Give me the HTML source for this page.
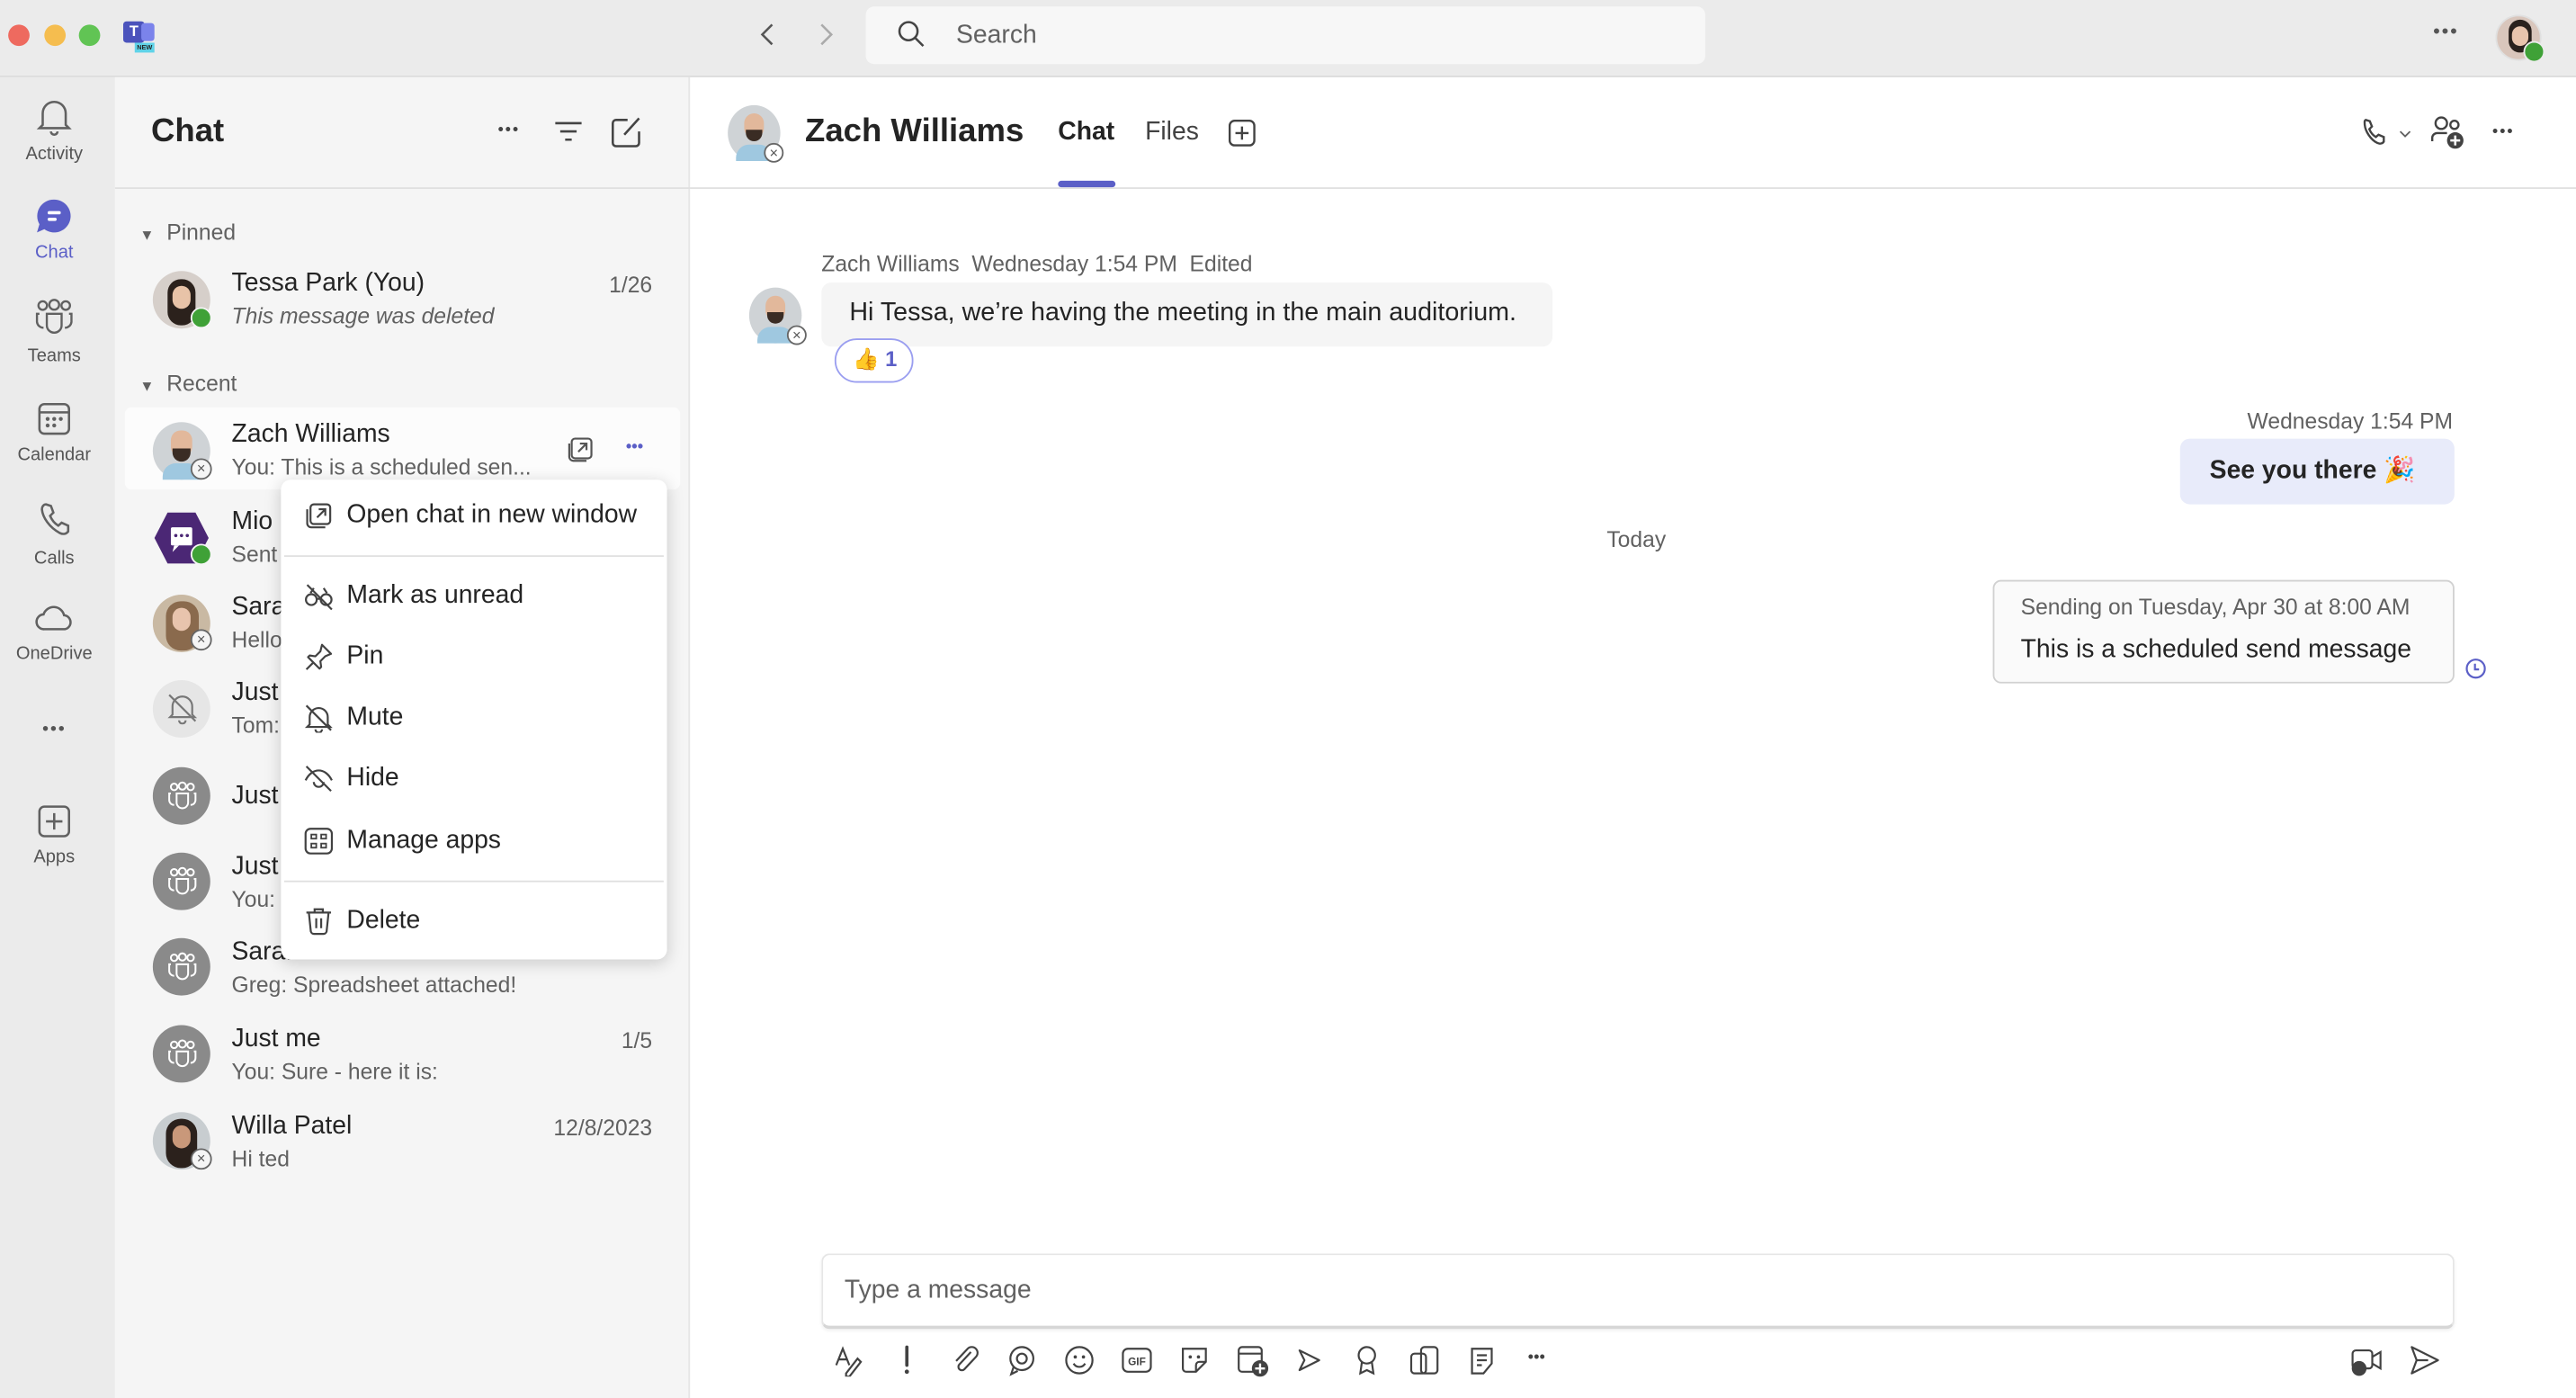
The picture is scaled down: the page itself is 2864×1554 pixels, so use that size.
<!DOCTYPE html>
<html><head><meta charset="utf-8">
<style>
*{box-sizing:border-box;margin:0;padding:0}
html,body{width:2864px;height:1554px;overflow:hidden;background:#fff}
#w{width:1568px;height:851px;transform:scale(1.82653,1.8261);transform-origin:0 0;position:relative;font-family:"Liberation Sans",sans-serif;color:#242424}
.a{position:absolute}
.tb{left:0;top:0;width:1568px;height:47px;background:#ebebeb;border-bottom:1px solid #dcdcdc}
.rail{left:0;top:47px;width:70px;height:804px;background:#ebebeb}
.list{left:70px;top:47px;width:350px;height:804px;background:#f5f5f5;border-right:1px solid #e6e6e6}
.ri{position:absolute;left:0;width:66px;text-align:center;font-size:11px;color:#555}
.ri svg{display:block;margin:0 auto 4px}
.av{position:absolute;width:35px;height:35px;border-radius:50%}
.st{position:absolute;width:13px;height:13px;border-radius:50%;border:1.5px solid #f5f5f5}
.ok{background:#3fa137}
.off{background:#f5f5f5;border:1px solid #666;font-size:9px;line-height:10px;text-align:center;color:#555}
.nm{position:absolute;left:141px;font-size:15.5px;color:#242424}
.pv{position:absolute;left:141px;font-size:13.5px;color:#616161}
.dt{position:absolute;right:1171px;font-size:13.5px;color:#616161;text-align:right}
.grp{background:#8a8a8a}
.menu{left:171px;top:292px;width:235px;height:292px;background:#fff;border-radius:6px;box-shadow:0 2px 10px rgba(0,0,0,.18)}
.mi{position:absolute;left:40px;font-size:15.5px;color:#242424}
.mic{position:absolute;left:14px}
.sep{position:absolute;left:2px;right:2px;height:1px;background:#e0e0e0}
.tool svg{position:absolute;top:818px}
</style></head><body><div id="w">
<div class="a tb"></div>
<div class="a" style="left:5px;top:15px;width:13px;height:13px;border-radius:50%;background:#ee6a5f"></div>
<div class="a" style="left:27px;top:15px;width:13px;height:13px;border-radius:50%;background:#f5bd4f"></div>
<div class="a" style="left:48px;top:15px;width:13px;height:13px;border-radius:50%;background:#61c454"></div>
<div class="a" style="left:75px;top:13px;width:13px;height:13px;background:#4b53bc;border-radius:2px;color:#fff;font-size:9px;font-weight:bold;text-align:center;line-height:13px">T</div>
<div class="a" style="left:86px;top:14px;width:8px;height:11px;background:#7b83eb;border-radius:2px"></div>
<div class="a" style="left:82px;top:26px;width:12px;height:6px;background:#5fd3e8;font-size:4px;line-height:6px;text-align:center;font-weight:bold">NEW</div>
<svg class="a" style="left:460px;top:13px" width="14" height="16"><path d="M10 2 4 8l6 6" fill="none" stroke="#555" stroke-width="1.4"/></svg>
<svg class="a" style="left:496px;top:13px" width="14" height="16"><path d="M4 2l6 6-6 6" fill="none" stroke="#aaa" stroke-width="1.4"/></svg>
<div class="a" style="left:527px;top:4px;width:511px;height:35px;background:#f7f7f7;border-radius:5px"></div>
<svg class="a" style="left:546px;top:12px" width="18" height="18"><circle cx="7" cy="7" r="5.5" fill="none" stroke="#444" stroke-width="1.4"/><path d="M11 11l5 5" stroke="#444" stroke-width="1.4"/></svg>
<div class="a" style="left:582px;top:13px;font-size:15.5px;color:#616161">Search</div>
<div class="a" style="left:1481px;top:12px;font-size:12px;color:#555;letter-spacing:1px">•••</div>
<div class="a" style="left:1519px;top:9px;width:28px;height:28px;border-radius:50%;background:#d9c6bc;border:1px solid #e0e0e0"><div style="position:absolute;left:7px;top:2px;width:14px;height:20px;border-radius:7px;background:#2a211d"></div><div style="position:absolute;left:9px;top:6px;width:10px;height:12px;border-radius:5px;background:#e8c4ad"></div></div>
<div class="a" style="left:1536px;top:25px;width:13px;height:13px;border-radius:50%;background:#3fa137;border:1.5px solid #ebebeb"></div>

<div class="a rail"></div>
<div class="ri" style="top:58px"><svg width="24" height="26"><path d="M5 18V11a7 7 0 0 1 14 0v7l2 2H3z M10 22a2 2 0 0 0 4 0" fill="none" stroke="#616161" stroke-width="1.4"/></svg>Activity</div>
<div class="ri" style="top:120px;color:#5b5fc7"><svg width="24" height="24"><path d="M12 1.5a10 10 0 1 1-6 18L1.5 21.5 3 16.5A10 10 0 0 1 12 1.5z" fill="#5b5fc7"/><rect x="8" y="8.5" width="8" height="2" rx="1" fill="#fff"/><rect x="8" y="12.5" width="5.5" height="2" rx="1" fill="#fff"/></svg>Chat</div>
<div class="ri" style="top:181px"><svg width="26" height="26"><circle cx="6" cy="5" r="2.6" fill="none" stroke="#616161" stroke-width="1.3"/><circle cx="13" cy="4.5" r="3" fill="none" stroke="#616161" stroke-width="1.3"/><circle cx="20" cy="5" r="2.6" fill="none" stroke="#616161" stroke-width="1.3"/><path d="M4 10h-1.5v5a4 4 0 0 0 4 3.5M22 10h1.5v5a4 4 0 0 1-4 3.5M8.5 10h9v7a4.5 4.5 0 0 1-9 0z" fill="none" stroke="#616161" stroke-width="1.3"/></svg>Teams</div>
<div class="ri" style="top:243px"><svg width="24" height="24"><rect x="3" y="3" width="18" height="18" rx="3" fill="none" stroke="#616161" stroke-width="1.4"/><path d="M3 8h18" stroke="#616161" stroke-width="1.4"/><g fill="#616161"><circle cx="8" cy="12" r="1.2"/><circle cx="12" cy="12" r="1.2"/><circle cx="16" cy="12" r="1.2"/><circle cx="8" cy="16" r="1.2"/><circle cx="12" cy="16" r="1.2"/></g></svg>Calendar</div>
<div class="ri" style="top:304px"><svg width="24" height="26"><path d="M7 3l3 1 1.5 4-2 2c1 2.5 2.5 4.5 5 6l2-1.8 4 1.8v3.5c-1 1.5-3 2-5 1C9 17 5 11 4.5 6 4.5 4.5 5.5 3 7 3z" fill="none" stroke="#616161" stroke-width="1.4"/></svg>Calls</div>
<div class="ri" style="top:366px"><svg width="26" height="22"><path d="M7 17a4.5 4.5 0 0 1-.5-9A6.5 6.5 0 0 1 19 8.5 4.3 4.3 0 0 1 19.5 17z" fill="none" stroke="#616161" stroke-width="1.4"/></svg>OneDrive</div>
<div class="ri" style="top:438px;font-size:11px;letter-spacing:1px;color:#555">•••</div>
<div class="ri" style="top:488px"><svg width="24" height="24"><rect x="3" y="3" width="18" height="18" rx="3" fill="none" stroke="#616161" stroke-width="1.4"/><path d="M12 7v10M7 12h10" stroke="#616161" stroke-width="1.4"/></svg>Apps</div>

<div class="a list"></div>
<div class="a" style="left:70px;top:114px;width:350px;height:1px;background:#e0e0e0"></div>
<div class="a" style="left:92px;top:69px;font-size:20px;font-weight:bold">Chat</div>
<div class="a" style="left:303px;top:74px;font-size:10px;letter-spacing:1px;color:#444">•••</div>
<svg class="a" style="left:337px;top:72px" width="18" height="16"><path d="M1 3h16M4 8h10M7 13h4" stroke="#444" stroke-width="1.4"/></svg>
<svg class="a" style="left:371px;top:70px" width="20" height="20"><path d="M11 3H4a2 2 0 0 0-2 2v12a2 2 0 0 0 2 2h12a2 2 0 0 0 2-2V10" fill="none" stroke="#444" stroke-width="1.4"/><path d="M9 12l9-10" stroke="#444" stroke-width="1.4"/></svg>

<div class="a" style="left:85px;top:134px;font-size:13.5px;color:#616161"><span style="font-size:9px">▼</span>&nbsp; Pinned</div>
<div class="av" style="left:93px;top:165px;background:#d6cfca"><div style="position:absolute;left:9px;top:5px;width:17px;height:28px;border-radius:8px;background:#2b211c"></div><div style="position:absolute;left:12px;top:9px;width:11px;height:14px;border-radius:6px;background:#e8c3a8"></div></div>
<div class="st ok" style="left:116px;top:187px"></div>
<div class="nm" style="top:164px">Tessa Park (You)</div>
<div class="pv" style="top:185px;font-style:italic">This message was deleted</div>
<div class="dt" style="top:166px">1/26</div>

<div class="a" style="left:85px;top:226px;font-size:13.5px;color:#616161"><span style="font-size:9px">▼</span>&nbsp; Recent</div>
<div class="a" style="left:76px;top:248px;width:338px;height:50px;background:#fcfcfc;border-radius:4px"></div>
<div class="av" style="left:93px;top:257px;background:#cfd3d6"><div style="position:absolute;left:11px;top:5px;width:13px;height:16px;border-radius:6px;background:#e2b89b"></div><div style="position:absolute;left:12px;top:16px;width:11px;height:8px;border-radius:0 0 6px 6px;background:#3a2c24"></div><div style="position:absolute;left:6px;top:25px;width:23px;height:10px;border-radius:8px 8px 0 0;background:#9fc8e0"></div></div>
<div class="st off" style="left:116px;top:279px">×</div>
<div class="nm" style="top:256px">Zach Williams</div>
<div class="pv" style="top:277px">You: This is a scheduled sen...</div>
<svg class="a" style="left:345px;top:265px" width="17" height="17"><rect x="3" y="2" width="12" height="12" rx="2" fill="none" stroke="#555" stroke-width="1.2"/><path d="M1.5 5v8a2.5 2.5 0 0 0 2.5 2.5h8M7 10l5-5M8 5h4v4" fill="none" stroke="#555" stroke-width="1.2"/></svg>
<div class="a" style="left:381px;top:267px;font-size:10px;color:#5b5fc7;font-weight:bold">•••</div>

<svg class="a" style="left:93px;top:310px" width="35" height="35"><path d="M9 2h17l8 15.5-8 15.5H9L1 17.5z" fill="#4b2775"/><rect x="11" y="11" width="13" height="11" rx="1" fill="#fff"/><path d="M13 22l-1 4 4-4" fill="#fff"/><g fill="#4b2775"><circle cx="14" cy="16" r="1"/><circle cx="17.5" cy="16" r="1"/><circle cx="21" cy="16" r="1"/></g></svg>
<div class="st ok" style="left:116px;top:331px"></div>
<div class="nm" style="top:309px">Mio</div><div class="pv" style="top:330px">Sent</div>

<div class="av" style="left:93px;top:362px;background:#c9b9a3"><div style="position:absolute;left:8px;top:4px;width:20px;height:30px;border-radius:9px;background:#8a6a4d"></div><div style="position:absolute;left:12px;top:8px;width:11px;height:14px;border-radius:6px;background:#e8c4ad"></div></div>
<div class="st off" style="left:116px;top:383px">×</div>
<div class="nm" style="top:361px">Sara</div><div class="pv" style="top:382px">Hello</div>

<div class="av" style="left:93px;top:414px;background:#e6e6e6"></div>
<svg class="a" style="left:101px;top:421px" width="20" height="20"><path d="M4 14V9a6 6 0 0 1 12 0v5l1.5 1.5h-15zM8 17.5a2 2 0 0 0 4 0M2 2l16 16" fill="none" stroke="#777" stroke-width="1.2"/></svg>
<div class="nm" style="top:413px">Just</div><div class="pv" style="top:434px">Tom:</div>

<div class="av grp" style="left:93px;top:467px"></div>
<div class="nm" style="top:476px">Just</div>
<div class="av grp" style="left:93px;top:519px"></div>
<div class="nm" style="top:519px">Just</div><div class="pv" style="top:540px">You:</div>
<div class="av grp" style="left:93px;top:571px"></div>
<div class="nm" style="top:571px">Sara..</div><div class="pv" style="top:592px">Greg: Spreadsheet attached!</div>
<div class="av grp" style="left:93px;top:624px"></div>
<div class="nm" style="top:624px">Just me</div><div class="pv" style="top:645px">You: Sure - here it is:</div>
<div class="dt" style="top:626px">1/5</div>
<svg class="a" style="left:101px;top:475px" width="20" height="20"><g fill="none" stroke="#fff" stroke-width="1.1"><circle cx="5" cy="4" r="2"/><circle cx="10" cy="3.5" r="2.2"/><circle cx="15" cy="4" r="2"/><path d="M3 8H2v4a3 3 0 0 0 3 3M17 8h1v4a3 3 0 0 1-3 3M6.5 8h7v5.5a3.5 3.5 0 0 1-7 0z"/></g></svg>
<svg class="a" style="left:101px;top:527px" width="20" height="20"><g fill="none" stroke="#fff" stroke-width="1.1"><circle cx="5" cy="4" r="2"/><circle cx="10" cy="3.5" r="2.2"/><circle cx="15" cy="4" r="2"/><path d="M3 8H2v4a3 3 0 0 0 3 3M17 8h1v4a3 3 0 0 1-3 3M6.5 8h7v5.5a3.5 3.5 0 0 1-7 0z"/></g></svg>
<svg class="a" style="left:101px;top:579px" width="20" height="20"><g fill="none" stroke="#fff" stroke-width="1.1"><circle cx="5" cy="4" r="2"/><circle cx="10" cy="3.5" r="2.2"/><circle cx="15" cy="4" r="2"/><path d="M3 8H2v4a3 3 0 0 0 3 3M17 8h1v4a3 3 0 0 1-3 3M6.5 8h7v5.5a3.5 3.5 0 0 1-7 0z"/></g></svg>
<svg class="a" style="left:101px;top:632px" width="20" height="20"><g fill="none" stroke="#fff" stroke-width="1.1"><circle cx="5" cy="4" r="2"/><circle cx="10" cy="3.5" r="2.2"/><circle cx="15" cy="4" r="2"/><path d="M3 8H2v4a3 3 0 0 0 3 3M17 8h1v4a3 3 0 0 1-3 3M6.5 8h7v5.5a3.5 3.5 0 0 1-7 0z"/></g></svg>

<div class="av" style="left:93px;top:677px;background:#c8cdd0"><div style="position:absolute;left:8px;top:4px;width:19px;height:30px;border-radius:9px;background:#2b211c"></div><div style="position:absolute;left:12px;top:8px;width:11px;height:14px;border-radius:6px;background:#c9987a"></div></div>
<div class="st off" style="left:116px;top:699px">×</div>
<div class="nm" style="top:677px">Willa Patel</div><div class="pv" style="top:698px">Hi ted</div>
<div class="dt" style="top:679px">12/8/2023</div>

<div class="a menu">
<svg class="mic" style="top:13px" width="18" height="18"><rect x="4" y="2" width="12" height="12" rx="2" fill="none" stroke="#424242" stroke-width="1.2"/><path d="M2 5v8.5A2.5 2.5 0 0 0 4.5 16H13M8 10l5-5M9 5h4v4" fill="none" stroke="#424242" stroke-width="1.2"/></svg>
<div class="mi" style="top:13px">Open chat in new window</div>
<div class="sep" style="top:46px"></div>
<svg class="mic" style="top:62px" width="18" height="18"><circle cx="4.5" cy="11" r="3.3" fill="none" stroke="#424242" stroke-width="1.2"/><circle cx="13.5" cy="11" r="3.3" fill="none" stroke="#424242" stroke-width="1.2"/><path d="M8 10.5h2M2 2l15 15M4 7l2-3M14 7l-2-3" fill="none" stroke="#424242" stroke-width="1.2"/></svg>
<div class="mi" style="top:62px">Mark as unread</div>
<svg class="mic" style="top:99px" width="18" height="18"><path d="M11 1.5l5.5 5.5-3.5 1.5-3 3 .5 3.5-1 1L2.5 9l1-1 3.5.5 3-3zM6 12l-4.5 4.5" fill="none" stroke="#424242" stroke-width="1.2" stroke-linejoin="round"/></svg>
<div class="mi" style="top:99px">Pin</div>
<svg class="mic" style="top:136px" width="18" height="18"><path d="M3.5 13V8.5a5.5 5.5 0 0 1 11 0V13l1.5 1.5H2zM7 16a2 2 0 0 0 4 0M1.5 1.5l15 15" fill="none" stroke="#424242" stroke-width="1.2"/></svg>
<div class="mi" style="top:136px">Mute</div>
<svg class="mic" style="top:173px" width="18" height="18"><path d="M1 10c2-4 5-6 8-6s6 2 8 6M6 11a3 3 0 0 0 6 0M1.5 1.5l15 15" fill="none" stroke="#424242" stroke-width="1.2"/></svg>
<div class="mi" style="top:173px">Hide</div>
<svg class="mic" style="top:211px" width="18" height="18"><rect x="1" y="1.5" width="16" height="15" rx="3" fill="none" stroke="#424242" stroke-width="1.2"/><rect x="4.5" y="5" width="3" height="2.5" fill="none" stroke="#424242"/><rect x="10.5" y="5" width="3" height="2.5" fill="none" stroke="#424242"/><rect x="4.5" y="10.5" width="3" height="2.5" fill="none" stroke="#424242"/><rect x="10.5" y="10.5" width="3" height="2.5" fill="none" stroke="#424242"/></svg>
<div class="mi" style="top:211px">Manage apps</div>
<div class="sep" style="top:244px"></div>
<svg class="mic" style="top:260px" width="18" height="18"><path d="M1.5 3.5h15M6.5 3.5V1.5h5v2M3 3.5l1.2 11.5a2 2 0 0 0 2 1.5h5.6a2 2 0 0 0 2-1.5L15 3.5M7.5 7v6M10.5 7v6" fill="none" stroke="#424242" stroke-width="1.2"/></svg>
<div class="mi" style="top:260px">Delete</div>
</div>

<div class="a" style="left:420px;top:114px;width:1148px;height:1px;background:#e0e0e0"></div>
<div class="av" style="left:443px;top:64px;width:32px;height:34px;background:#cfd3d6"><div style="position:absolute;left:10px;top:5px;width:12px;height:15px;border-radius:6px;background:#e2b89b"></div><div style="position:absolute;left:11px;top:15px;width:10px;height:7px;border-radius:0 0 5px 5px;background:#3a2c24"></div><div style="position:absolute;left:5px;top:24px;width:22px;height:10px;border-radius:8px 8px 0 0;background:#9fc8e0"></div></div>
<div class="st off" style="left:465px;top:87px;width:12px;height:12px;background:#fff">×</div>
<div class="a" style="left:490px;top:69px;font-size:20px;font-weight:bold">Zach Williams</div>
<div class="a" style="left:644px;top:72px;font-size:15.5px;font-weight:bold">Chat</div>
<div class="a" style="left:644px;top:110px;width:35px;height:4px;background:#5b5fc7;border-radius:2px"></div>
<div class="a" style="left:697px;top:72px;font-size:15.5px;color:#424242">Files</div>
<svg class="a" style="left:747px;top:72px" width="18" height="18"><rect x="1.5" y="1.5" width="15" height="15" rx="3" fill="none" stroke="#424242" stroke-width="1.3"/><path d="M9 5v8M5 9h8" stroke="#424242" stroke-width="1.3"/></svg>
<svg class="a" style="left:1436px;top:71px" width="34" height="20"><path d="M4 2l2.5.8 1.3 3.2-1.6 1.6c.8 2 2 3.6 4 4.8l1.6-1.4 3.2 1.4v2.8c-.8 1.2-2.4 1.6-4 .8C7 14 3.8 9 3.4 5 3.4 3.5 3 2.5 4 2z" fill="none" stroke="#424242" stroke-width="1.3"/><path d="M25 9l3 3 3-3" fill="none" stroke="#616161" stroke-width="1"/></svg>
<svg class="a" style="left:1479px;top:70px" width="22" height="22"><circle cx="7" cy="5" r="3.5" fill="none" stroke="#424242" stroke-width="1.3"/><circle cx="15" cy="6" r="2.5" fill="none" stroke="#424242" stroke-width="1.3"/><path d="M1.5 16v-2a3 3 0 0 1 3-3h6" fill="none" stroke="#424242" stroke-width="1.3"/><circle cx="15.5" cy="15.5" r="5" fill="#424242"/><path d="M15.5 12.5v6M12.5 15.5h6" stroke="#fff" stroke-width="1.4"/></svg>
<div class="a" style="left:1517px;top:75px;font-size:10px;letter-spacing:1px;color:#424242">•••</div>

<div class="a" style="left:500px;top:153px;font-size:13.5px;color:#616161">Zach Williams&nbsp; Wednesday 1:54 PM&nbsp; Edited</div>
<div class="av" style="left:456px;top:175px;width:32px;height:34px;background:#cfd3d6"><div style="position:absolute;left:10px;top:5px;width:12px;height:15px;border-radius:6px;background:#e2b89b"></div><div style="position:absolute;left:11px;top:15px;width:10px;height:7px;border-radius:0 0 5px 5px;background:#3a2c24"></div><div style="position:absolute;left:5px;top:24px;width:22px;height:10px;border-radius:8px 8px 0 0;background:#9fc8e0"></div></div>
<div class="st off" style="left:479px;top:198px;width:12px;height:12px;background:#fff">×</div>
<div class="a" style="left:500px;top:172px;width:445px;height:39px;background:#f5f5f5;border-radius:6px"></div>
<div class="a" style="left:517px;top:182px;font-size:15.7px">Hi Tessa, we’re having the meeting in the main auditorium.</div>
<div class="a" style="left:508px;top:206px;width:48px;height:27px;border:1.5px solid #9a9ef0;border-radius:14px;background:#fff;font-size:13px;color:#5b5fc7;font-weight:bold;padding:4px 0 0 10px"><span style="color:#f2a43a">👍</span> 1</div>

<div class="a" style="right:75px;top:249px;font-size:13.5px;color:#616161">Wednesday 1:54 PM</div>
<div class="a" style="left:1327px;top:267px;width:167px;height:40px;background:#e8ebfa;border-radius:6px"></div>
<div class="a" style="left:1345px;top:277px;font-size:15.5px;font-weight:bold">See you there <span style="color:#e8743b">🎉</span></div>

<div class="a" style="left:978px;top:321px;font-size:13.5px;color:#616161">Today</div>

<div class="a" style="left:1213px;top:353px;width:281px;height:63px;background:#fafafa;border:1px solid #d1d1d1;border-radius:5px"></div>
<div class="a" style="left:1230px;top:362px;font-size:13.5px;color:#616161">Sending on Tuesday, Apr 30 at 8:00 AM</div>
<div class="a" style="left:1230px;top:387px;font-size:15.5px">This is a scheduled send message</div>
<svg class="a" style="left:1500px;top:400px" width="14" height="14"><circle cx="7" cy="7" r="5.5" fill="none" stroke="#5b5fc7" stroke-width="1.2"/><path d="M6.5 4v3.5h2.5" fill="none" stroke="#5b5fc7" stroke-width="1.2"/></svg>

<div class="a" style="left:500px;top:763px;width:994px;height:46px;background:#fff;border:1px solid #e6e6e6;border-bottom:2px solid #d6d6d6;border-radius:5px;box-shadow:0 1px 2px rgba(0,0,0,.06)"></div>
<div class="a" style="left:514px;top:777px;font-size:15.5px;color:#616161">Type a message</div>
<div class="tool">
<svg style="left:507px" width="20" height="20"><path d="M2 13L6 3l4 10M3.5 9.5h5M8 18l7-9 2 2-7 9H8z" fill="none" stroke="#424242" stroke-width="1.2"/></svg>
<svg style="left:542px" width="20" height="20"><path d="M10 2v11" stroke="#424242" stroke-width="2" stroke-linecap="round"/><circle cx="10" cy="17" r="1.3" fill="#424242"/></svg>
<svg style="left:577px" width="20" height="20"><path d="M14 5l-7 7.5a2 2 0 0 0 3 3l7-7.5a3.5 3.5 0 0 0-5-5L5 10.5" fill="none" stroke="#424242" stroke-width="1.2"/></svg>
<svg style="left:612px" width="20" height="20"><circle cx="10" cy="9" r="7" fill="none" stroke="#424242" stroke-width="1.2"/><path d="M5 14l-1.5 4.5 4-2" fill="none" stroke="#424242" stroke-width="1.2"/><circle cx="10" cy="9" r="3" fill="none" stroke="#424242" stroke-width="1.2"/></svg>
<svg style="left:647px" width="20" height="20"><circle cx="10" cy="10" r="8" fill="none" stroke="#424242" stroke-width="1.2"/><circle cx="7.5" cy="8" r="1" fill="#424242"/><circle cx="12.5" cy="8" r="1" fill="#424242"/><path d="M6.5 12a4 4 0 0 0 7 0" fill="none" stroke="#424242" stroke-width="1.2"/></svg>
<svg style="left:682px" width="20" height="20"><rect x="1.5" y="3" width="17" height="14" rx="3" fill="none" stroke="#424242" stroke-width="1.2"/><text x="10" y="13" font-size="6.5" font-family="Liberation Sans" text-anchor="middle" fill="#424242" font-weight="bold">GIF</text></svg>
<svg style="left:717px" width="20" height="20"><path d="M3 3h14v8l-6 6H5a2 2 0 0 1-2-2zM17 11h-4a2 2 0 0 0-2 2v4" fill="none" stroke="#424242" stroke-width="1.2"/><circle cx="7.5" cy="8" r="1" fill="#424242"/><circle cx="12.5" cy="8" r="1" fill="#424242"/></svg>
<svg style="left:752px" width="22" height="22"><rect x="2" y="2" width="14" height="15" rx="2" fill="none" stroke="#424242" stroke-width="1.2"/><path d="M2 6h14" stroke="#424242" stroke-width="1.2"/><circle cx="15" cy="15" r="5" fill="#424242"/><path d="M15 12v6M12 15h6" stroke="#fff" stroke-width="1.3"/></svg>
<svg style="left:787px" width="20" height="20"><path d="M4 4l12 6-12 6 3-6z" fill="none" stroke="#424242" stroke-width="1.2" stroke-linejoin="round"/></svg>
<svg style="left:822px" width="20" height="20"><circle cx="10" cy="7" r="5" fill="none" stroke="#424242" stroke-width="1.2"/><path d="M7 11l-1 7 4-2 4 2-1-7" fill="none" stroke="#424242" stroke-width="1.2"/></svg>
<svg style="left:857px" width="20" height="20"><rect x="2" y="6" width="9" height="12" rx="2" fill="none" stroke="#424242" stroke-width="1.2"/><rect x="8" y="2" width="10" height="16" rx="2" fill="none" stroke="#424242" stroke-width="1.2"/></svg>
<svg style="left:892px" width="20" height="20"><path d="M4 3h12v9l-5 6H4z" fill="none" stroke="#424242" stroke-width="1.2"/><path d="M7 7h6M7 10h6M7 13h3" stroke="#424242" stroke-width="1.2"/></svg>
<div class="a" style="left:930px;top:821px;font-size:10px;color:#424242">•••</div>
<svg style="left:1430px" width="22" height="20"><rect x="2" y="4" width="12" height="11" rx="2" fill="none" stroke="#424242" stroke-width="1.2"/><path d="M14 8l5-3v10l-5-3" fill="none" stroke="#424242" stroke-width="1.2"/><circle cx="6" cy="15" r="4.5" fill="#424242"/></svg>
<svg style="left:1466px" width="20" height="20"><path d="M2 2l16 8-16 8 3-8zM5 10h7" fill="none" stroke="#424242" stroke-width="1.2" stroke-linejoin="round"/></svg>
</div>
</div></body></html>
